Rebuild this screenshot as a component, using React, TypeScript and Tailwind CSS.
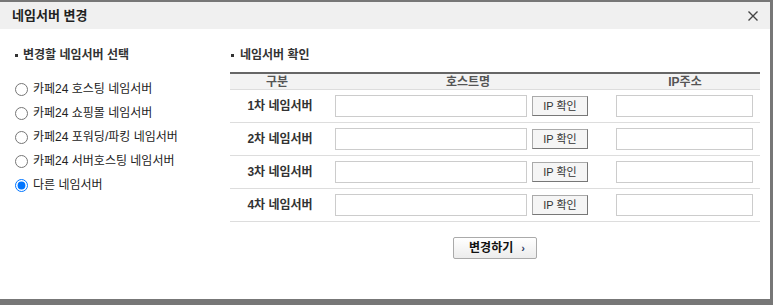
import React from "react";

const font = { fontFamily: '"Liberation Sans", "Noto Sans CJK KR", sans-serif' };

const options = [
  "카페24 호스팅 네임서버",
  "카페24 쇼핑몰 네임서버",
  "카페24 포워딩/파킹 네임서버",
  "카페24 서버호스팅 네임서버",
  "다른 네임서버",
];

const rows = ["1차 네임서버", "2차 네임서버", "3차 네임서버", "4차 네임서버"];

function Bullet() {
  return <span className="inline-block w-[3px] h-[3px] bg-[#333] shrink-0" />;
}

export default function App() {
  return (
    <div className="w-[773px] h-[305px] bg-[#777] pt-[2px]" style={font}>
      <div className="w-[770px] h-[297px] bg-white flex flex-col">
        {/* header */}
        <div className="h-[27px] bg-[#f0f0f0] flex items-center justify-between pl-[12px] pr-[12px]">
          <span className="text-[13px] font-bold text-[#222] leading-none">네임서버 변경</span>
          <svg width="10" height="10" viewBox="0 0 10 10" className="mt-[1px]">
            <path d="M0.5 0.5 L9.5 9.5 M9.5 0.5 L0.5 9.5" stroke="#444" strokeWidth="1.4" />
          </svg>
        </div>

        {/* body */}
        <div className="flex pt-[17px]">
          {/* left */}
          <div className="w-[230px] pl-[15px]">
            <div className="h-[18px] flex items-center gap-[5px]">
              <Bullet />
              <span className="text-[12px] font-bold text-[#333] leading-none">변경할 네임서버 선택</span>
            </div>
            <div className="mt-[13px] flex flex-col">
              {options.map((o, i) => (
                <label key={o} className="h-[24px] flex items-center gap-[5px] text-[12px] text-[#222] leading-none">
                  <input
                    type="radio"
                    name="ns"
                    defaultChecked={i === 4}
                    className="m-0 w-[13px] h-[13px]"
                  />
                  <span>{o}</span>
                </label>
              ))}
            </div>
          </div>

          {/* right */}
          <div className="w-[530px]">
            <div className="h-[18px] flex items-center gap-[6px] pl-[1px]">
              <Bullet />
              <span className="text-[12px] font-bold text-[#333] leading-none">네임서버 확인</span>
            </div>
            <div className="mt-[8px] border-t-2 border-[#666]">
              <div className="grid grid-cols-[100px_276px_154px] h-[16px] bg-[#f3f3f3] border-b border-[#ddd] text-[12px] font-bold text-[#555] leading-none">
                <div className="flex items-center justify-center pr-[6px]">구분</div>
                <div className="flex items-center justify-center">호스트명</div>
                <div className="flex items-center justify-center pl-[4px]">IP주소</div>
              </div>
              {rows.map((r) => (
                <div key={r} className="grid grid-cols-[100px_276px_154px] h-[33px] border-b border-[#ddd]">
                  <div className="flex items-center justify-center text-[12px] font-bold text-[#333] leading-none">{r}</div>
                  <div className="flex items-center pl-[5px] gap-[5px]">
                    <input
                      type="text"
                      className="w-[192px] h-[22px] border border-[#ccc] bg-white outline-none"
                    />
                    <button className="w-[56px] h-[20px] border border-[#777] border-t-[#aaa] border-l-[#aaa] bg-[#f5f5f5] text-[11px] text-[#333] leading-none">
                      IP 확인
                    </button>
                  </div>
                  <div className="flex items-center pl-[10px]">
                    <input
                      type="text"
                      className="w-[137px] h-[22px] border border-[#ccc] bg-white outline-none"
                    />
                  </div>
                </div>
              ))}
            </div>
            <div className="flex justify-center mt-[15px]">
              <button className="w-[84px] h-[22px] border border-[#aaa] rounded-[2px] bg-gradient-to-b from-white to-[#ececec] flex items-center justify-center gap-[8px] pl-[4px]">
                <span className="text-[12px] font-bold text-[#111] leading-none">변경하기</span>
                <span className="text-[11px] font-bold text-[#2b3a67] leading-none">›</span>
              </button>
            </div>
          </div>
        </div>
      </div>
    </div>
  );
}
